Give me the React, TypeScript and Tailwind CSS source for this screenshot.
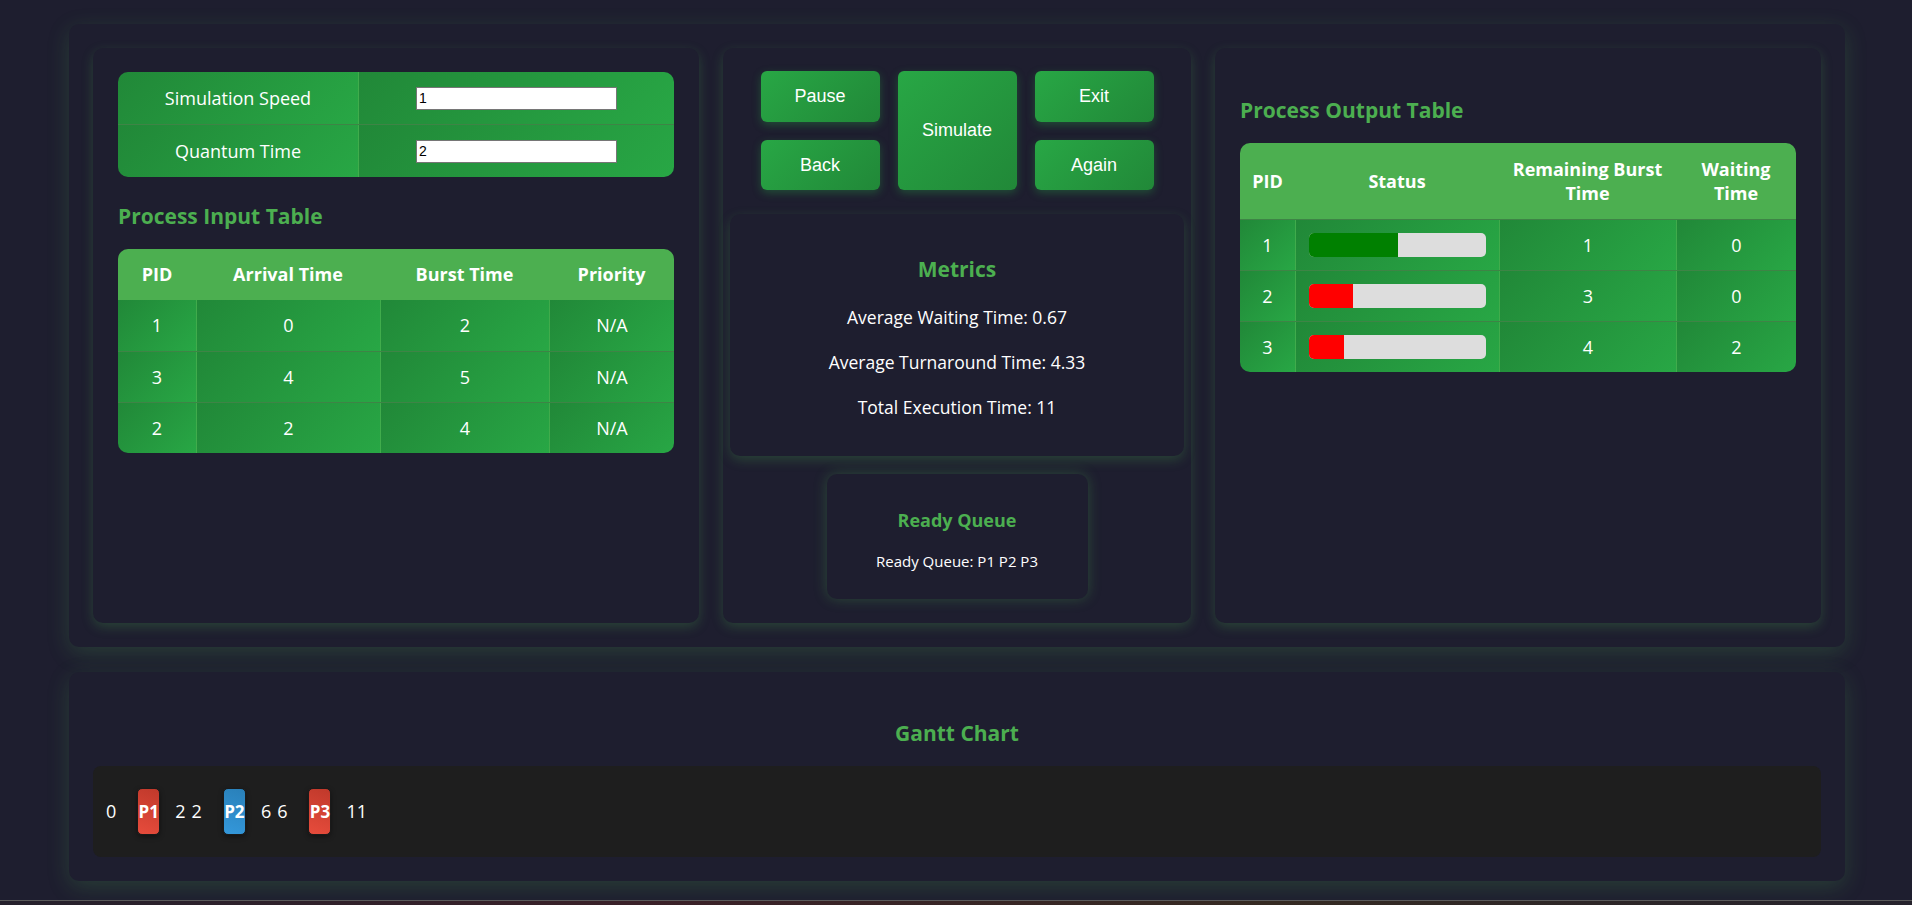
import React from "react"

const inputRows = [
  { pid: 1, arrival: 0, burst: 2, priority: "N/A" },
  { pid: 3, arrival: 4, burst: 5, priority: "N/A" },
  { pid: 2, arrival: 2, burst: 4, priority: "N/A" },
]

const outputRows = [
  { pid: 1, progress: 50, color: "#008000", remaining: 1, waiting: 0 },
  { pid: 2, progress: 25, color: "#ff0000", remaining: 3, waiting: 0 },
  { pid: 3, progress: 20, color: "#ff0000", remaining: 4, waiting: 2 },
]

const gantt = [
  { start: 0, name: "P1", end: 2, block: "bg-[linear-gradient(200deg,#c0392b,#e74c3c)]" },
  { start: 2, name: "P2", end: 6, block: "bg-[linear-gradient(200deg,#2980b9,#3498db)]" },
  { start: 6, name: "P3", end: 11, block: "bg-[linear-gradient(200deg,#c0392b,#e74c3c)]" },
]

const cell =
  "flex items-center justify-center text-center bg-[linear-gradient(135deg,#218838,#28a745)]"

function Btn({ children, className = "" }: { children: React.ReactNode; className?: string }) {
  return (
    <button
      className={`flex items-center justify-center rounded-[6px] bg-[linear-gradient(135deg,#28a745,#218838)] text-white text-[18px] font-['Liberation_Sans',Arial,sans-serif] shadow-[0_3px_8px_rgba(40,167,69,0.35)] ${className}`}
    >
      {children}
    </button>
  )
}

export default function App() {
  return (
    <div className="h-[905px] overflow-hidden bg-[#1e1e2f] pt-[24px] text-white font-['Open_Sans',sans-serif]">
      {/* Top section */}
      <div className="ml-[69px] w-[1776px] rounded-[10px] bg-[#1e1e2f] p-[24px] shadow-[0_6px_22px_rgba(76,175,80,0.22)]">
        <div className="grid grid-cols-[1fr_468px_1fr] gap-[24px]">
          {/* Left panel */}
          <div className="rounded-[10px] bg-[#1e1e2f] px-[25px] pt-[24px] shadow-[0_4px_12px_rgba(76,175,80,0.25)]">
            <div className="overflow-hidden rounded-[10px] text-[18px]">
              {[
                { label: "Simulation Speed", value: "1" },
                { label: "Quantum Time", value: "2" },
              ].map((row, i) => (
                <div
                  key={i}
                  className={`grid grid-cols-[240px_1fr] ${i > 0 ? "h-[53px] border-t border-[rgba(76,175,80,0.7)]" : "h-[52px]"}`}
                >
                  <div className={cell}>{row.label}</div>
                  <div className={`${cell} border-l border-[rgba(76,175,80,0.7)]`}>
                    <input
                      readOnly
                      defaultValue={row.value}
                      className="w-[201px] h-[23px] bg-white border border-[#767676] px-[2px] text-black text-[14px] font-['Liberation_Sans',Arial,sans-serif] outline-none"
                    />
                  </div>
                </div>
              ))}
            </div>

            <h3 className="mt-[26px] mb-[19px] text-[21px] leading-[27px] font-bold text-[#4caf50]">
              Process Input Table
            </h3>

            <div className="overflow-hidden rounded-[10px] text-[18px]">
              <div className="grid grid-cols-[78px_184px_169px_1fr] h-[51px] bg-[#4caf50] font-bold">
                <div className="flex items-center justify-center">PID</div>
                <div className="flex items-center justify-center">Arrival Time</div>
                <div className="flex items-center justify-center">Burst Time</div>
                <div className="flex items-center justify-center">Priority</div>
              </div>
              {inputRows.map((row, i) => (
                <div
                  key={i}
                  className={`grid grid-cols-[78px_184px_169px_1fr] h-[51px] ${i > 0 ? "border-t border-[rgba(76,175,80,0.7)]" : ""}`}
                >
                  <div className={cell}>{row.pid}</div>
                  <div className={`${cell} border-l border-[rgba(76,175,80,0.7)]`}>{row.arrival}</div>
                  <div className={`${cell} border-l border-[rgba(76,175,80,0.7)]`}>{row.burst}</div>
                  <div className={`${cell} border-l border-[rgba(76,175,80,0.7)]`}>{row.priority}</div>
                </div>
              ))}
            </div>
          </div>

          {/* Middle panel */}
          <div className="flex flex-col items-center rounded-[10px] bg-[#1e1e2f] px-[7px] pt-[23px] pb-[24px] shadow-[0_4px_12px_rgba(76,175,80,0.25)]">
            <div className="grid grid-cols-[119px_119px_119px] grid-rows-[51px_50px] gap-[18px]">
              <Btn>Pause</Btn>
              <Btn className="row-span-2">Simulate</Btn>
              <Btn>Exit</Btn>
              <Btn>Back</Btn>
              <Btn>Again</Btn>
            </div>

            <div className="mt-[24px] w-full rounded-[10px] bg-[#1e1e2f] pt-[41px] pb-[37px] text-center shadow-[0_4px_12px_rgba(76,175,80,0.25)]">
              <h3 className="text-[21px] leading-[28px] font-bold text-[#4caf50]">Metrics</h3>
              <div className="mt-[22px] flex flex-col gap-[21px] text-[17.5px] leading-[24px]">
                <p>Average Waiting Time: 0.67</p>
                <p>Average Turnaround Time: 4.33</p>
                <p>Total Execution Time: 11</p>
              </div>
            </div>

            <div className="mt-[18px] w-[261px] rounded-[10px] bg-[#1e1e2f] pt-[35px] pb-[28px] text-center shadow-[0_0_14px_rgba(76,175,80,0.3)]">
              <h4 className="text-[18px] leading-[22px] font-bold text-[#4caf50]">Ready Queue</h4>
              <p className="mt-[20px] text-[15px] leading-[20px]">Ready Queue: P1 P2 P3</p>
            </div>
          </div>

          {/* Right panel */}
          <div className="rounded-[10px] bg-[#1e1e2f] px-[25px] pt-[24px] shadow-[0_4px_12px_rgba(76,175,80,0.25)]">
            <h3 className="mt-[25px] mb-[19px] text-[21px] leading-[27px] font-bold text-[#4caf50]">
              Process Output Table
            </h3>

            <div className="overflow-hidden rounded-[10px] text-[18px]">
              <div className="grid grid-cols-[55px_204px_177px_1fr] h-[76px] bg-[#4caf50] font-bold leading-[24px]">
                <div className="flex items-center justify-center text-center px-[12px]">PID</div>
                <div className="flex items-center justify-center text-center px-[12px]">Status</div>
                <div className="flex items-center justify-center text-center px-[12px]">Remaining Burst Time</div>
                <div className="flex items-center justify-center text-center px-[12px]">Waiting Time</div>
              </div>
              {outputRows.map((row, i) => (
                <div
                  key={i}
                  className="grid grid-cols-[55px_204px_177px_1fr] h-[51px] border-t border-[rgba(76,175,80,0.7)]"
                >
                  <div className={cell}>{row.pid}</div>
                  <div className={`${cell} border-l border-[rgba(76,175,80,0.7)] px-[13px]`}>
                    <div className="h-[24px] w-full overflow-hidden rounded-[5px] bg-[#dddddd]">
                      <div className="h-full" style={{ width: `${row.progress}%`, backgroundColor: row.color }} />
                    </div>
                  </div>
                  <div className={`${cell} border-l border-[rgba(76,175,80,0.7)]`}>{row.remaining}</div>
                  <div className={`${cell} border-l border-[rgba(76,175,80,0.7)]`}>{row.waiting}</div>
                </div>
              ))}
            </div>
          </div>
        </div>
      </div>

      {/* Gantt chart */}
      <div className="ml-[69px] mt-[25px] w-[1776px] rounded-[10px] bg-[#1e1e2f] px-[24px] pt-[24px] pb-[24px] shadow-[0_6px_22px_rgba(76,175,80,0.22)]">
        <h3 className="mt-[24px] mb-[19px] text-center text-[21px] leading-[27px] font-bold text-[#4caf50]">
          Gantt Chart
        </h3>
        <div className="flex h-[91px] items-center gap-[6px] rounded-[8px] bg-[#1e1e1e] px-[13px] text-[18px]">
          {gantt.map((g, i) => (
            <div key={i} className="flex items-center">
              <span className="mr-[21px]">{g.start}</span>
              <div
                className={`flex h-[47px] w-[23px] items-center justify-center rounded-[5px] border border-[#1a1a1a] text-[17px] font-bold shadow-[0_2px_5px_rgba(0,0,0,0.4)] ${g.block}`}
              >
                {g.name}
              </div>
              <span className="ml-[15px]">{g.end}</span>
            </div>
          ))}
        </div>
      </div>

      <div className="mt-[19px] h-[6px] border-t border-[#5a5a5a] bg-[linear-gradient(90deg,#25202c,#3a2028,#352a22,#25222c)]" />
    </div>
  )
}
